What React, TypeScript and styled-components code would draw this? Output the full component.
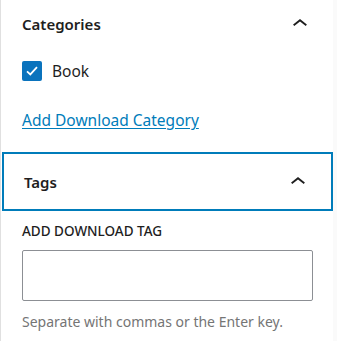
import React from 'react'
import styled, { createGlobalStyle } from 'styled-components'

const GlobalStyle = createGlobalStyle`
	html, body {
		margin: 0;
		padding: 0;
		background: #ffffff;
	}
	body {
		font-family: 'Noto Sans', 'Open Sans', Arial, sans-serif;
		color: #1e1e1e;
	}
`

const Layout = styled.div`
	display: flex;
	min-height: 341px;
	width: 337px;
	overflow: hidden;
`

const Sidebar = styled.div`
	width: 332px;
	border-left: 1px solid #e0e0e0;
	background: #ffffff;
	display: flex;
	flex-direction: column;
`

const Gutter = styled.div`
	flex: 1;
	background: #fafafa;
`

interface HeaderProps {
	focused?: boolean
	height: number
}

const PanelHeader = styled.div<HeaderProps>`
	display: flex;
	flex-shrink: 0;
	align-items: center;
	justify-content: space-between;
	height: ${props => props.height}px;
	box-sizing: border-box;
	margin: ${props => (props.focused ? '0 0 0 1px' : '0')};
	padding: 0 18px 0 ${props => (props.focused ? '20px' : '21px')};
	border: ${props => (props.focused ? '2px solid #007cba' : 'none')};
`

const PanelTitle = styled.span`
	font-size: 15px;
	font-weight: 600;
	color: #1e1e1e;
`

const PanelBody = styled.div`
	display: flex;
	flex-shrink: 0;
	flex-direction: column;
	align-items: flex-start;
	padding: 0 19px 20px 21px;
`

const CheckRow = styled.label`
	display: flex;
	align-items: center;
	gap: 10px;
	margin-top: 12px;
	font-size: 15.5px;
`

const CheckBox = styled.span`
	display: flex;
	align-items: center;
	justify-content: center;
	width: 20px;
	height: 20px;
	border-radius: 2px;
	background: #0a73bd;
`

const Link = styled.a`
	margin-top: 26px;
	font-size: 15.5px;
	line-height: 24px;
	color: #007cba;
	text-decoration: underline;
	text-underline-offset: 2px;
`

const FieldLabel = styled.span`
	margin-top: 11px;
	font-size: 13.5px;
	font-weight: 500;
	text-transform: uppercase;
	line-height: 18px;
`

const TagInput = styled.input`
	margin-top: 10px;
	width: 291px;
	height: 51px;
	box-sizing: border-box;
	border: 1px solid #8c8f94;
	border-radius: 2px;
	outline: none;
	background: #ffffff;
	font: inherit;
`

const Help = styled.span`
	margin-top: 11px;
	font-size: 14px;
	color: #757575;
`

const Chevron = () => (
	<svg width="30" height="30" viewBox="0 0 24 24" fill="#1e1e1e">
		<path d="M6.5 12.4L12 8l5.5 4.4-.9 1.2L12 10l-4.6 3.6-1-1.2z" />
	</svg>
)

export default function App() {
	return (
		<Layout>
			<GlobalStyle />
			<Sidebar>
				<PanelHeader height={48}>
					<PanelTitle>{'Categories'}</PanelTitle>
					<Chevron />
				</PanelHeader>
				<PanelBody>
					<CheckRow>
						<CheckBox>
							<svg width="16" height="16" viewBox="0 0 16 16" fill="none">
								<path d="M3 8.4L6.3 11.4L13 4.2" stroke="#ffffff" strokeWidth="1.8" />
							</svg>
						</CheckBox>
						{'Book'}
					</CheckRow>
					<Link href="#">{'Add Download Category'}</Link>
				</PanelBody>
				<PanelHeader height={59} focused>
					<PanelTitle>{'Tags'}</PanelTitle>
					<Chevron />
				</PanelHeader>
				<PanelBody>
					<FieldLabel>{'Add Download Tag'}</FieldLabel>
					<TagInput type="text" />
					<Help>{'Separate with commas or the Enter key.'}</Help>
				</PanelBody>
			</Sidebar>
			<Gutter />
		</Layout>
	)
}
